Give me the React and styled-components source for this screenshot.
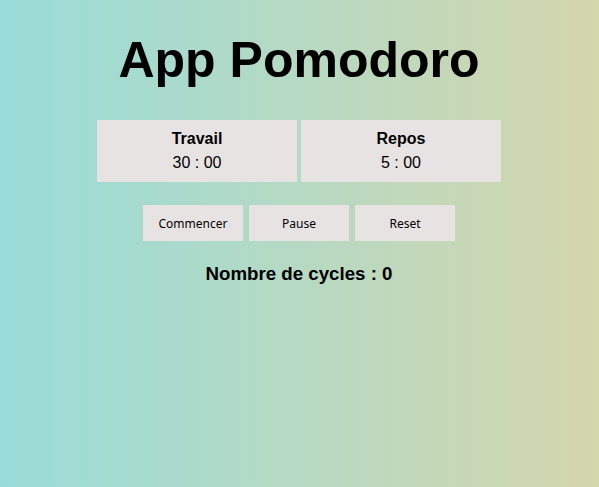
import React from "react";
import styled, { createGlobalStyle } from "styled-components";

const GlobalStyle = createGlobalStyle`
  html, body {
    margin: 0;
    padding: 0;
  }
  body {
    font-family: "Liberation Sans", Arial, sans-serif;
    color: #000;
  }
`;

const Page = styled.div`
  min-height: 487px;
  background: linear-gradient(to right, #98dcd9, #d4d6ac);
  display: flex;
  flex-direction: column;
  align-items: center;
  padding: 32px 1px 0 0;
  box-sizing: border-box;
`;

const Title = styled.h1`
  margin: 0;
  font-size: 50px;
  font-weight: bold;
  line-height: 56px;
`;

const Timers = styled.div`
  display: flex;
  gap: 4px;
  margin-top: 32px;
`;

const TimerBox = styled.div`
  width: 200px;
  height: 62px;
  box-sizing: border-box;
  padding-top: 10px;
  background: #e8e3e3;
  text-align: center;
`;

const TimerLabel = styled.div`
  font-size: 16px;
  font-weight: bold;
  line-height: 18px;
`;

const TimerValue = styled.div`
  font-size: 16px;
  line-height: 18px;
  margin-top: 6px;
`;

const Controls = styled.div`
  display: flex;
  gap: 6px;
  margin-top: 23px;
`;

const Button = styled.button`
  width: 100px;
  height: 36px;
  border: none;
  background: #e8e3e3;
  font-family: "Noto Sans", "Open Sans", sans-serif;
  font-size: 12px;
  color: #000;
  padding: 0;
  cursor: pointer;
`;

const Cycles = styled.h3`
  margin: 22px 0 0;
  font-size: 18.7px;
  font-weight: bold;
  line-height: 22px;
`;

const Timer = ({ label, value }) => (
  <TimerBox>
    <TimerLabel>{label}</TimerLabel>
    <TimerValue>{value}</TimerValue>
  </TimerBox>
);

export default function App() {
  return (
    <>
      <GlobalStyle />
      <Page>
        <Title>App Pomodoro</Title>
        <Timers>
          <Timer label="Travail" value="30 : 00" />
          <Timer label="Repos" value="5 : 00" />
        </Timers>
        <Controls>
          <Button>Commencer</Button>
          <Button>Pause</Button>
          <Button>Reset</Button>
        </Controls>
        <Cycles>Nombre de cycles : 0</Cycles>
      </Page>
    </>
  );
}
